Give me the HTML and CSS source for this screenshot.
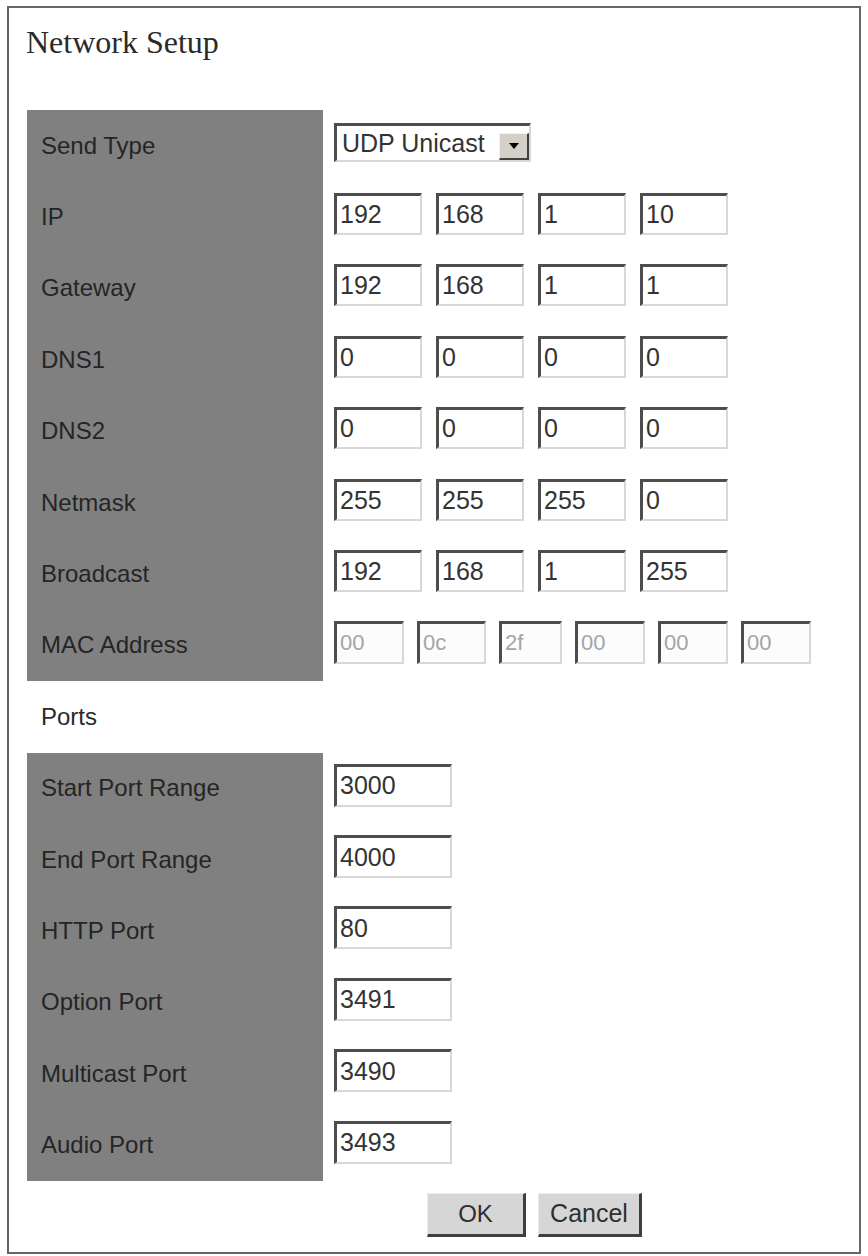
FILE: index.html
```html
<!DOCTYPE html>
<html lang="en">
<head>
<meta charset="utf-8">
<title>Network Setup</title>
<link rel="stylesheet" href="styles.css">
</head>
<body>
<div class="window">
  <h1 class="title">Network Setup</h1>
  <div class="form">
    <div class="label">Send Type</div>
    <div class="ctrl">
      <div class="select">
        <span class="select-value">UDP Unicast</span>
        <span class="select-btn"><svg width="10" height="6" viewBox="0 0 10 6"><path d="M0 0H10L5 6Z" fill="#000"/></svg></span>
      </div>
    </div>

    <div class="label">IP</div>
    <div class="ctrl">
      <input class="field oct" value="192"><input class="field oct" value="168"><input class="field oct" value="1"><input class="field oct" value="10">
    </div>

    <div class="label">Gateway</div>
    <div class="ctrl">
      <input class="field oct" value="192"><input class="field oct" value="168"><input class="field oct" value="1"><input class="field oct" value="1">
    </div>

    <div class="label">DNS1</div>
    <div class="ctrl">
      <input class="field oct" value="0"><input class="field oct" value="0"><input class="field oct" value="0"><input class="field oct" value="0">
    </div>

    <div class="label">DNS2</div>
    <div class="ctrl">
      <input class="field oct" value="0"><input class="field oct" value="0"><input class="field oct" value="0"><input class="field oct" value="0">
    </div>

    <div class="label">Netmask</div>
    <div class="ctrl">
      <input class="field oct" value="255"><input class="field oct" value="255"><input class="field oct" value="255"><input class="field oct" value="0">
    </div>

    <div class="label">Broadcast</div>
    <div class="ctrl">
      <input class="field oct" value="192"><input class="field oct" value="168"><input class="field oct" value="1"><input class="field oct" value="255">
    </div>

    <div class="label">MAC Address</div>
    <div class="ctrl mac">
      <input class="field hex" value="00" disabled><input class="field hex" value="0c" disabled><input class="field hex" value="2f" disabled><input class="field hex" value="00" disabled><input class="field hex" value="00" disabled><input class="field hex" value="00" disabled>
    </div>

    <div class="section">Ports</div>

    <div class="label">Start Port Range</div>
    <div class="ctrl"><input class="field port" value="3000"></div>

    <div class="label">End Port Range</div>
    <div class="ctrl"><input class="field port" value="4000"></div>

    <div class="label">HTTP Port</div>
    <div class="ctrl"><input class="field port" value="80"></div>

    <div class="label">Option Port</div>
    <div class="ctrl"><input class="field port" value="3491"></div>

    <div class="label">Multicast Port</div>
    <div class="ctrl"><input class="field port" value="3490"></div>

    <div class="label">Audio Port</div>
    <div class="ctrl"><input class="field port" value="3493"></div>

    <div class="actions">
      <button class="btn btn-ok" type="button">OK</button>
      <button class="btn btn-cancel" type="button">Cancel</button>
    </div>
  </div>
</div>
</body>
</html>
```

FILE: styles.css
```css
html, body {
  margin: 0;
  padding: 0;
  background: #fff;
}

body {
  font-family: "Liberation Sans", Arial, sans-serif;
  color: #222;
}

.window {
  box-sizing: border-box;
  width: 854px;
  margin: 6px 0 0 7px;
  border: 2px solid #666;
  background: #fff;
}

.title {
  margin: 14px 0 0 17px;
  font-family: "Liberation Serif", "Times New Roman", serif;
  font-weight: normal;
  font-size: 32px;
  line-height: 40px;
  color: #2a2a2a;
}

.form {
  margin: 48px 0 0 18px;
  display: grid;
  grid-template-columns: 296px 1fr;
  grid-auto-rows: 71.4px;
  column-gap: 11px;
}

.label {
  background: #808080;
  display: flex;
  align-items: center;
  padding-left: 14px;
  font-size: 24px;
  color: #252525;
}

.section {
  grid-column: 1 / -1;
  display: flex;
  align-items: center;
  padding-left: 14px;
  font-size: 24px;
  color: #2a2a2a;
}

.ctrl {
  display: flex;
  align-items: center;
  gap: 14px;
  padding-bottom: 6px;
}

.ctrl.mac {
  gap: 13px;
}

.field {
  box-sizing: border-box;
  height: 42px;
  margin: 0;
  padding: 0 0 0 3px;
  font-family: "Liberation Sans", Arial, sans-serif;
  font-size: 25px;
  color: #333;
  background: #fff;
  border-style: solid;
  border-width: 3px 2px 2px 3px;
  border-color: #4d4d4d #d8d8d8 #d8d8d8 #4d4d4d;
  border-radius: 0;
  outline: none;
}

.oct {
  width: 88px;
}

.hex {
  width: 70px;
  height: 43px;
  font-size: 22px;
  color: #a4a4a4;
  background: #fcfcfc;
}

.hex:nth-child(2) {
  width: 69px;
}

.hex:nth-child(3) {
  width: 63px;
}

.port {
  width: 118px;
  height: 43px;
}

.select {
  box-sizing: border-box;
  width: 197px;
  height: 39px;
  display: flex;
  align-items: center;
  padding: 0 0 0 5px;
  background: #fff;
  border-style: solid;
  border-width: 3px 2px 2px 3px;
  border-color: #4d4d4d #d8d8d8 #d8d8d8 #4d4d4d;
}

.select-value {
  flex: 1;
  font-size: 25px;
  color: #333;
  line-height: 32px;
}

.select-btn {
  box-sizing: border-box;
  align-self: flex-end;
  width: 30px;
  height: 27px;
  display: flex;
  align-items: center;
  justify-content: center;
  background: #d4d0c8;
  border-style: solid;
  border-width: 1px 2px 2px 1px;
  border-color: #f2f2f2 #404040 #404040 #f2f2f2;
}

.actions {
  grid-column: 2;
  display: flex;
  align-items: flex-start;
  gap: 12px;
  padding: 12px 0 0 93px;
}

.btn {
  box-sizing: border-box;
  height: 44px;
  margin: 0;
  padding: 0;
  font-family: "Liberation Sans", Arial, sans-serif;
  font-size: 24px;
  color: #2f2f2f;
  background: #d6d6d6;
  border-style: solid;
  border-width: 1px 3px 3px 1px;
  border-color: #ececec #3f3f3f #3f3f3f #ececec;
  border-radius: 0;
}

.btn-ok {
  width: 99px;
}

.btn-cancel {
  width: 104px;
  font-size: 25px;
}
```
